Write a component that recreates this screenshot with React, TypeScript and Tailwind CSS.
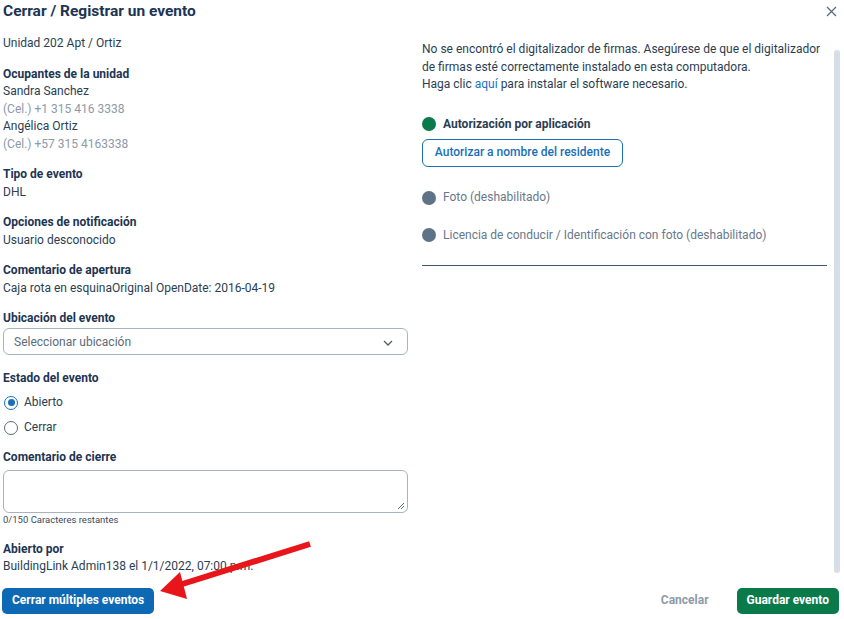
import React from 'react';

const Field: React.FC<{ label: string; children: React.ReactNode }> = ({ label, children }) => (
  <div className="mb-[13px]">
    <div className="font-bold text-[#1c3553]">{label}</div>
    {children}
  </div>
);

const App: React.FC = () => {
  return (
    <div
      className="relative w-[844px] h-[619px] bg-white flex flex-col text-[12px] leading-[17.5px] text-[#2b3e52] overflow-hidden"
      style={{ fontFamily: 'Roboto, "Liberation Sans", sans-serif' }}
    >
      {/* Header */}
      <div className="h-[22px] flex items-center justify-between pl-[3px] pr-[7px]">
        <h1 className="text-[15.5px] font-bold text-[#1c3553] leading-[22px]">Cerrar / Registrar un evento</h1>
        <svg width="11" height="11" viewBox="0 0 11 11" className="text-[#5b6b7c]">
          <path d="M1 1L10 10M10 1L1 10" stroke="currentColor" strokeWidth="1.3" />
        </svg>
      </div>

      {/* Body */}
      <div className="flex-1 flex">
        {/* Left column */}
        <div className="w-[408px] pl-[3px] pt-[13px]">
          <div className="mb-[13px]">Unidad 202 Apt / Ortiz</div>

          <Field label="Ocupantes de la unidad">
            <div>Sandra Sanchez</div>
            <div className="text-[#8d9aaa]">(Cel.) +1 315 416 3338</div>
            <div>Angélica Ortiz</div>
            <div className="text-[#8d9aaa]">(Cel.) +57 315 4163338</div>
          </Field>

          <Field label="Tipo de evento">
            <div>DHL</div>
          </Field>

          <Field label="Opciones de notificación">
            <div>Usuario desconocido</div>
          </Field>

          <Field label="Comentario de apertura">
            <div>Caja rota en esquinaOriginal OpenDate: 2016-04-19</div>
          </Field>

          <div className="font-bold text-[#1c3553]">Ubicación del evento</div>
          <div className="h-[27px] border border-[#a7b3c0] rounded-[6px] flex items-center justify-between pl-[10px] pr-[14px] pt-[3px] text-[#5a6b7c]">
            <span>Seleccionar ubicación</span>
            <svg width="10" height="6" viewBox="0 0 10 6">
              <path d="M1 1L5 5L9 1" fill="none" stroke="#4b5c6d" strokeWidth="1.3" />
            </svg>
          </div>

          <div className="mt-[15px] font-bold text-[#1c3553]">Estado del evento</div>
          <div className="h-[25px] mt-[3px] flex items-center gap-[6px] pl-[1px]">
            <span className="w-[14px] h-[14px] rounded-full border-[1.5px] border-[#1a6fb8] flex items-center justify-center">
              <span className="w-[7px] h-[7px] rounded-full bg-[#1a6fb8]" />
            </span>
            <span>Abierto</span>
          </div>
          <div className="h-[25px] flex items-center gap-[6px] pl-[1px]">
            <span className="w-[14px] h-[14px] rounded-full border-[1.5px] border-[#5c6b7a]" />
            <span>Cerrar</span>
          </div>

          <div className="mt-[9px] font-bold text-[#1c3553]">Comentario de cierre</div>
          <div className="relative h-[43px] mt-[3px] border border-[#a7b3c0] rounded-[6px]">
            <svg width="8" height="8" viewBox="0 0 8 8" className="absolute right-[2px] bottom-[2px]">
              <path d="M7 1L1 7M7 4L4 7" stroke="#5b6b7c" strokeWidth="1" />
            </svg>
          </div>
          <div className="text-[9.5px] leading-[14px] text-[#3a4a5a]">0/150 Caracteres restantes</div>

          <div className="mt-[14px] font-bold text-[#1c3553]">Abierto por</div>
          <div>BuildingLink Admin138 el 1/1/2022, 07:00 p.m.</div>
        </div>

        {/* Right column */}
        <div className="w-[406px] ml-[14px] pt-[19px]">
          <p>
            No se encontró el digitalizador de firmas. Asegúrese de que el digitalizador de firmas esté correctamente instalado en esta computadora.
            <br />
            Haga clic <span className="text-[#1a73c0]">aquí</span> para instalar el software necesario.
          </p>

          <div className="mt-[22px] flex items-center gap-[7px]">
            <span className="w-[14px] h-[14px] rounded-full bg-[#0b7a4b]" />
            <span className="font-bold text-[#2b3e52]">Autorización por aplicación</span>
          </div>
          <button className="mt-[6px] h-[28px] w-[201px] border border-[#1a6fb8] rounded-[6px] text-[#1a6fb8] font-medium text-[12px]">
            Autorizar a nombre del residente
          </button>

          <div className="mt-[22px] flex items-center gap-[7px] text-[#68788a]">
            <span className="w-[14px] h-[14px] rounded-full bg-[#5f7386]" />
            <span>Foto (deshabilitado)</span>
          </div>
          <div className="mt-[20px] flex items-center gap-[7px] text-[#68788a]">
            <span className="w-[14px] h-[14px] rounded-full bg-[#5f7386]" />
            <span>Licencia de conducir / Identificación con foto (deshabilitado)</span>
          </div>

          <div className="mt-[21px] h-px w-[405px] bg-[#3b5573]" />
        </div>

        {/* Scrollbar */}
        <div className="ml-[6px] mt-[28px] w-[6px] h-[523px] rounded-full bg-[#d7dee6]" />
      </div>

      {/* Footer */}
      <div className="h-[36px] pt-[5px] flex items-start justify-between pl-[2px] pr-[5px]">
        <button className="h-[26px] px-[10px] rounded-[5px] bg-[#0d69b3] text-white font-bold text-[12px]">
          Cerrar múltiples eventos
        </button>
        <div className="flex items-center gap-[28px]">
          <span className="font-bold text-[#8e9aa8]">Cancelar</span>
          <button className="h-[26px] px-[10px] rounded-[5px] bg-[#0b7a4b] text-white font-bold text-[12px]">
            Guardar evento
          </button>
        </div>
      </div>

      {/* Annotation arrow */}
      <svg className="absolute left-0 top-0 pointer-events-none" width="844" height="619">
        <line x1="310" y1="544" x2="176" y2="586" stroke="#e8161b" strokeWidth="6" />
        <polygon points="160,591 180,572 187,599" fill="#e8161b" />
      </svg>
    </div>
  );
};

export default App;
